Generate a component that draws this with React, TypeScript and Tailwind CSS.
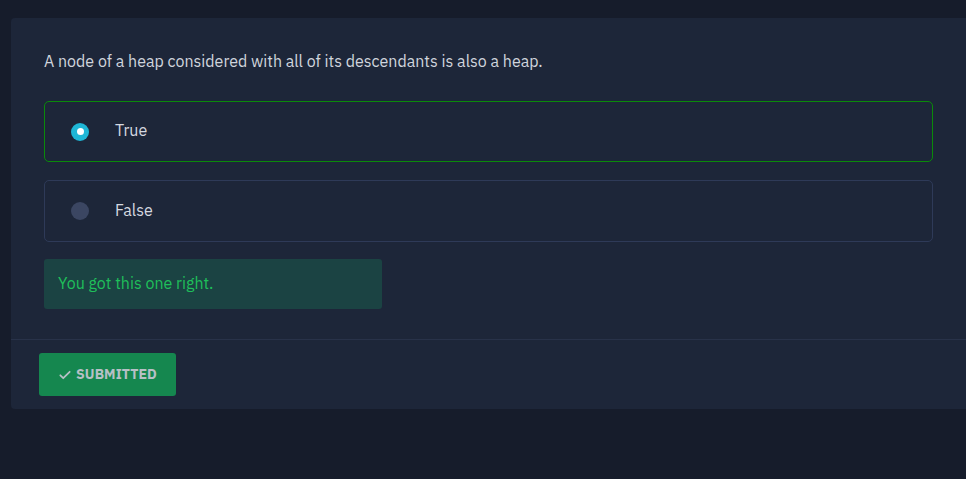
import React from "react";

export default function App() {
  return (
    <div className="w-[966px] h-[479px] bg-[#161c2b] pt-[18px] overflow-hidden" style={{ fontFamily: '"IBM Plex Sans", "Noto Sans", Inter, sans-serif' }}>
      <div className="ml-[11px] w-[970px] bg-[#1d2639] rounded-[4px]">
        <div className="pl-[33px] pr-[38px] pt-[32px] pb-[30px]">
          <p className="text-[16px] leading-[22px] text-[#d0d5dd]">
            A node of a heap considered with all of its descendants is also a heap.
          </p>
          <div className="mt-[29px] flex flex-col gap-[18px] w-[889px]">
            <div className="h-[61px] rounded-[5px] border border-[#0a8a0a] flex items-center pl-[26px]">
              <div className="w-[18px] h-[18px] rounded-full bg-[#1fb6d6] flex items-center justify-center">
                <div className="w-[7px] h-[7px] rounded-full bg-white" />
              </div>
              <span className="ml-[26px] text-[16px] text-[#d5d9e0] -mt-[3px]">True</span>
            </div>
            <div className="h-[62px] rounded-[5px] border border-[#2e3a58] flex items-center pl-[26px]">
              <div className="w-[18px] h-[18px] rounded-full bg-[#3b4662]" />
              <span className="ml-[26px] text-[16px] text-[#d5d9e0] -mt-[3px]">False</span>
            </div>
          </div>
          <div className="mt-[17px] w-[338px] h-[50px] rounded-[3px] bg-[#1b4343] flex items-center pl-[14px]">
            <span className="text-[16px] text-[#1fbf5a] -mt-[2px]">You got this one right.</span>
          </div>
        </div>
        <div className="border-t border-[#283249] pt-[13px] pb-[13px] pl-[28px]">
          <button className="h-[43px] w-[137px] rounded-[3px] bg-[#15874f] flex items-center justify-center gap-[4px] text-[14px] font-bold tracking-[0.1px] text-[#b7c0c6]">
            <svg width="14" height="14" viewBox="0 0 24 24" fill="none" stroke="#b7c0c6" strokeWidth="3" strokeLinecap="round" strokeLinejoin="round">
              <path d="M4 12.5l5 5L20 6.5" />
            </svg>
            SUBMITTED
          </button>
        </div>
      </div>
    </div>
  );
}
